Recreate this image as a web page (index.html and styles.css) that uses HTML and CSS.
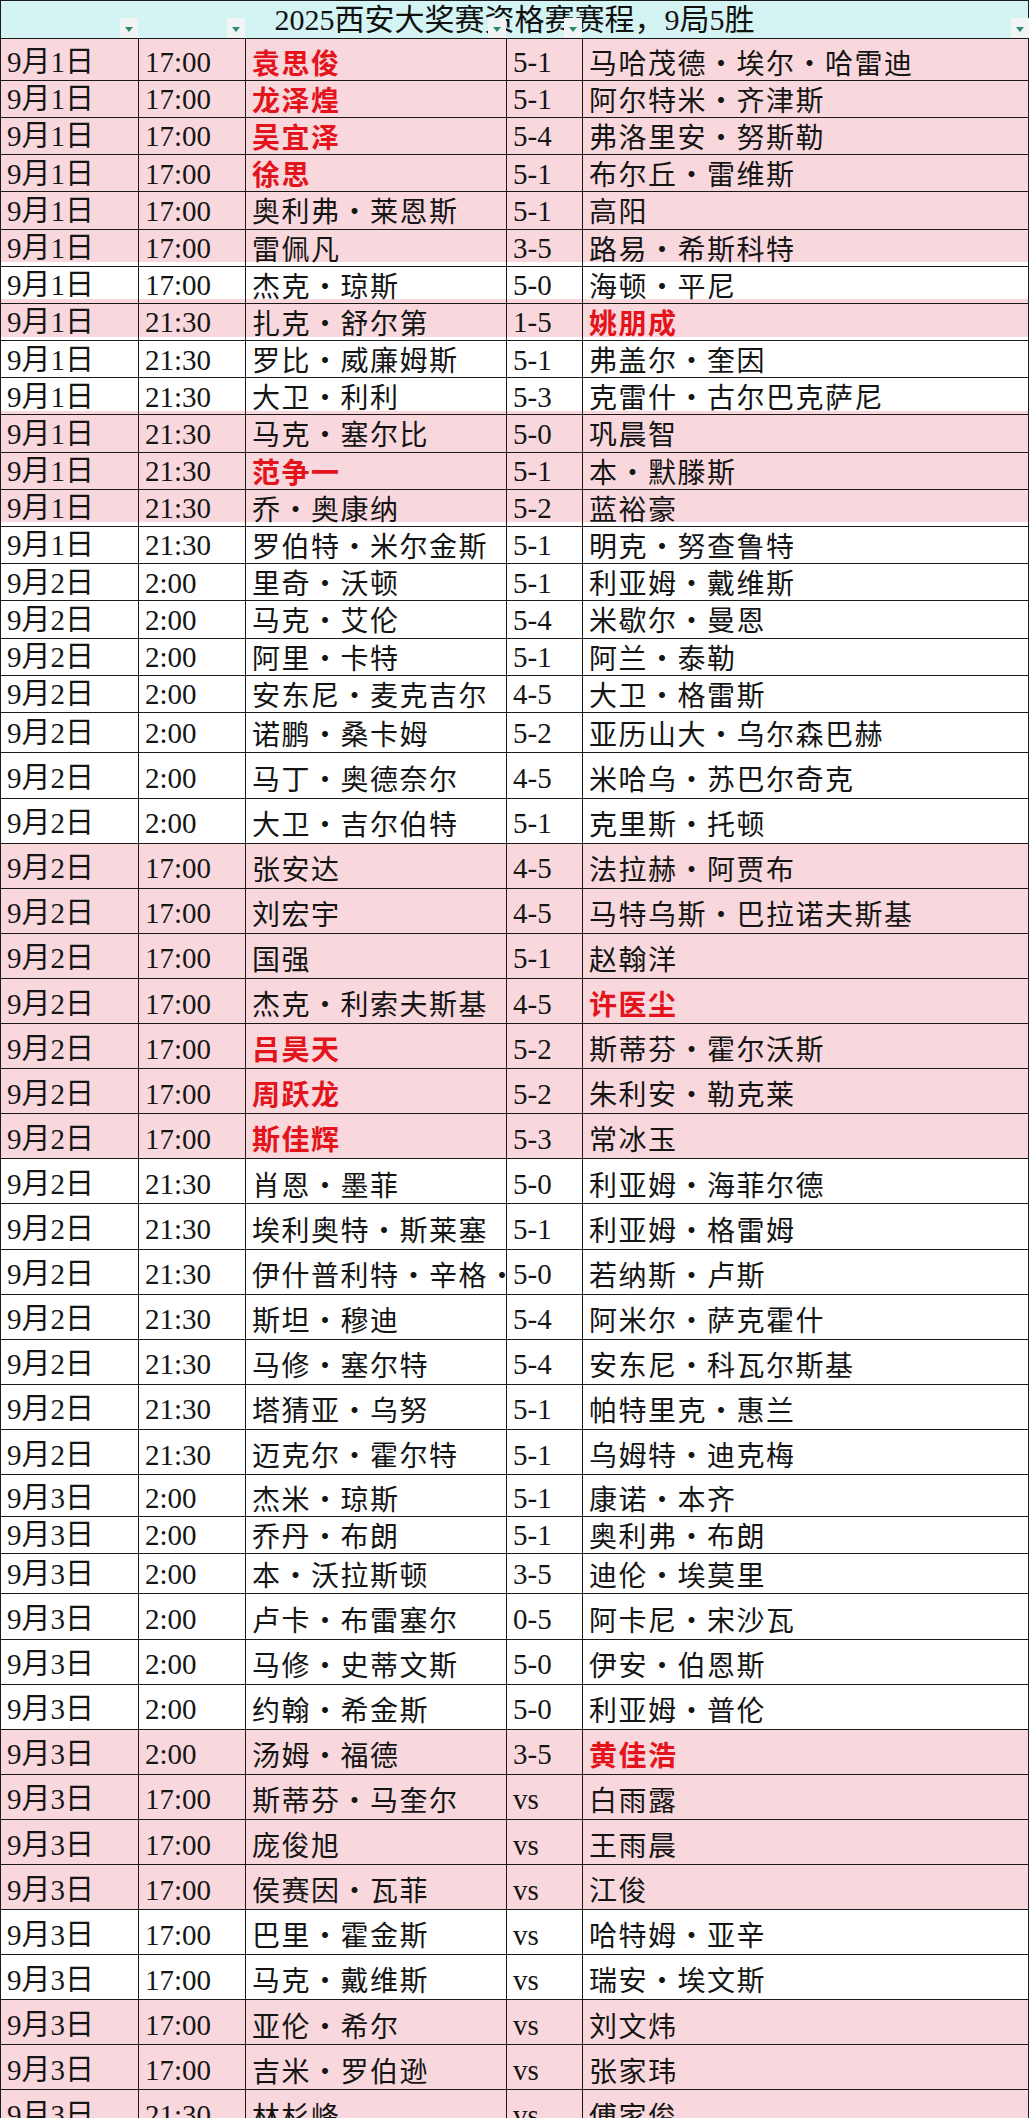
FILE: index.html
```html
<!DOCTYPE html>
<html lang="zh-CN">
<head>
<meta charset="utf-8">
<title>2025西安大奖赛资格赛赛程</title>
<link rel="stylesheet" href="styles.css">
</head>
<body>
<div class="sheet">
  <div class="head">
    <div class="title">2025西安大奖赛资格赛赛程，9局5胜</div>
    <div class="hc h1"><span class="dd"></span></div>
    <div class="hc h2"><span class="dd"></span></div>
    <div class="hc h3"><span class="dd"></span></div>
    <div class="hc h4"><span class="dd"></span></div>
    <div class="hc h5"><span class="dd"></span></div>
  </div>

  <div class="row s pink"><div class="c">9月1日</div><div class="c">17:00</div><div class="c n red">袁思俊</div><div class="c">5-1</div><div class="c n">马哈茂德•埃尔•哈雷迪</div></div>
  <div class="row s pink"><div class="c">9月1日</div><div class="c">17:00</div><div class="c n red">龙泽煌</div><div class="c">5-1</div><div class="c n">阿尔特米•齐津斯</div></div>
  <div class="row s pink"><div class="c">9月1日</div><div class="c">17:00</div><div class="c n red">吴宜泽</div><div class="c">5-4</div><div class="c n">弗洛里安•努斯勒</div></div>
  <div class="row s pink"><div class="c">9月1日</div><div class="c">17:00</div><div class="c n red">徐思</div><div class="c">5-1</div><div class="c n">布尔丘•雷维斯</div></div>
  <div class="row s pink"><div class="c">9月1日</div><div class="c">17:00</div><div class="c n">奥利弗•莱恩斯</div><div class="c">5-1</div><div class="c n">高阳</div></div>
  <div class="row s pink"><div class="c">9月1日</div><div class="c">17:00</div><div class="c n">雷佩凡</div><div class="c">3-5</div><div class="c n">路易•希斯科特</div></div>
  <div class="row s"><div class="c">9月1日</div><div class="c">17:00</div><div class="c n">杰克•琼斯</div><div class="c">5-0</div><div class="c n">海顿•平尼</div></div>
  <div class="row s pink"><div class="c">9月1日</div><div class="c">21:30</div><div class="c n">扎克•舒尔第</div><div class="c">1-5</div><div class="c n red">姚朋成</div></div>
  <div class="row s"><div class="c">9月1日</div><div class="c">21:30</div><div class="c n">罗比•威廉姆斯</div><div class="c">5-1</div><div class="c n">弗盖尔•奎因</div></div>
  <div class="row s"><div class="c">9月1日</div><div class="c">21:30</div><div class="c n">大卫•利利</div><div class="c">5-3</div><div class="c n">克雷什•古尔巴克萨尼</div></div>
  <div class="row s pink"><div class="c">9月1日</div><div class="c">21:30</div><div class="c n">马克•塞尔比</div><div class="c">5-0</div><div class="c n">巩晨智</div></div>
  <div class="row s pink"><div class="c">9月1日</div><div class="c">21:30</div><div class="c n red">范争一</div><div class="c">5-1</div><div class="c n">本•默滕斯</div></div>
  <div class="row s pink"><div class="c">9月1日</div><div class="c">21:30</div><div class="c n">乔•奥康纳</div><div class="c">5-2</div><div class="c n">蓝裕豪</div></div>
  <div class="row s"><div class="c">9月1日</div><div class="c">21:30</div><div class="c n">罗伯特•米尔金斯</div><div class="c">5-1</div><div class="c n">明克•努查鲁特</div></div>
  <div class="row s"><div class="c">9月2日</div><div class="c">2:00</div><div class="c n">里奇•沃顿</div><div class="c">5-1</div><div class="c n">利亚姆•戴维斯</div></div>
  <div class="row s"><div class="c">9月2日</div><div class="c">2:00</div><div class="c n">马克•艾伦</div><div class="c">5-4</div><div class="c n">米歇尔•曼恩</div></div>
  <div class="row s"><div class="c">9月2日</div><div class="c">2:00</div><div class="c n">阿里•卡特</div><div class="c">5-1</div><div class="c n">阿兰•泰勒</div></div>
  <div class="row s"><div class="c">9月2日</div><div class="c">2:00</div><div class="c n">安东尼•麦克吉尔</div><div class="c">4-5</div><div class="c n">大卫•格雷斯</div></div>
  <div class="row t"><div class="c">9月2日</div><div class="c">2:00</div><div class="c n">诺鹏•桑卡姆</div><div class="c">5-2</div><div class="c n">亚历山大•乌尔森巴赫</div></div>
  <div class="row t"><div class="c">9月2日</div><div class="c">2:00</div><div class="c n">马丁•奥德奈尔</div><div class="c">4-5</div><div class="c n">米哈乌•苏巴尔奇克</div></div>
  <div class="row t"><div class="c">9月2日</div><div class="c">2:00</div><div class="c n">大卫•吉尔伯特</div><div class="c">5-1</div><div class="c n">克里斯•托顿</div></div>
  <div class="row t pink"><div class="c">9月2日</div><div class="c">17:00</div><div class="c n">张安达</div><div class="c">4-5</div><div class="c n">法拉赫•阿贾布</div></div>
  <div class="row t pink"><div class="c">9月2日</div><div class="c">17:00</div><div class="c n">刘宏宇</div><div class="c">4-5</div><div class="c n">马特乌斯•巴拉诺夫斯基</div></div>
  <div class="row t pink"><div class="c">9月2日</div><div class="c">17:00</div><div class="c n">国强</div><div class="c">5-1</div><div class="c n">赵翰洋</div></div>
  <div class="row t pink"><div class="c">9月2日</div><div class="c">17:00</div><div class="c n">杰克•利索夫斯基</div><div class="c">4-5</div><div class="c n red">许医尘</div></div>
  <div class="row t pink"><div class="c">9月2日</div><div class="c">17:00</div><div class="c n red">吕昊天</div><div class="c">5-2</div><div class="c n">斯蒂芬•霍尔沃斯</div></div>
  <div class="row t pink"><div class="c">9月2日</div><div class="c">17:00</div><div class="c n red">周跃龙</div><div class="c">5-2</div><div class="c n">朱利安•勒克莱</div></div>
  <div class="row t pink"><div class="c">9月2日</div><div class="c">17:00</div><div class="c n red">斯佳辉</div><div class="c">5-3</div><div class="c n">常冰玉</div></div>
  <div class="row t"><div class="c">9月2日</div><div class="c">21:30</div><div class="c n">肖恩•墨菲</div><div class="c">5-0</div><div class="c n">利亚姆•海菲尔德</div></div>
  <div class="row t"><div class="c">9月2日</div><div class="c">21:30</div><div class="c n">埃利奥特•斯莱塞</div><div class="c">5-1</div><div class="c n">利亚姆•格雷姆</div></div>
  <div class="row t"><div class="c">9月2日</div><div class="c">21:30</div><div class="c n">伊什普利特•辛格•坎达</div><div class="c">5-0</div><div class="c n">若纳斯•卢斯</div></div>
  <div class="row t"><div class="c">9月2日</div><div class="c">21:30</div><div class="c n">斯坦•穆迪</div><div class="c">5-4</div><div class="c n">阿米尔•萨克霍什</div></div>
  <div class="row t"><div class="c">9月2日</div><div class="c">21:30</div><div class="c n">马修•塞尔特</div><div class="c">5-4</div><div class="c n">安东尼•科瓦尔斯基</div></div>
  <div class="row t"><div class="c">9月2日</div><div class="c">21:30</div><div class="c n">塔猜亚•乌努</div><div class="c">5-1</div><div class="c n">帕特里克•惠兰</div></div>
  <div class="row t"><div class="c">9月2日</div><div class="c">21:30</div><div class="c n">迈克尔•霍尔特</div><div class="c">5-1</div><div class="c n">乌姆特•迪克梅</div></div>
  <div class="row s"><div class="c">9月3日</div><div class="c">2:00</div><div class="c n">杰米•琼斯</div><div class="c">5-1</div><div class="c n">康诺•本齐</div></div>
  <div class="row s"><div class="c">9月3日</div><div class="c">2:00</div><div class="c n">乔丹•布朗</div><div class="c">5-1</div><div class="c n">奥利弗•布朗</div></div>
  <div class="row t"><div class="c">9月3日</div><div class="c">2:00</div><div class="c n">本•沃拉斯顿</div><div class="c">3-5</div><div class="c n">迪伦•埃莫里</div></div>
  <div class="row t"><div class="c">9月3日</div><div class="c">2:00</div><div class="c n">卢卡•布雷塞尔</div><div class="c">0-5</div><div class="c n">阿卡尼•宋沙瓦</div></div>
  <div class="row t"><div class="c">9月3日</div><div class="c">2:00</div><div class="c n">马修•史蒂文斯</div><div class="c">5-0</div><div class="c n">伊安•伯恩斯</div></div>
  <div class="row t"><div class="c">9月3日</div><div class="c">2:00</div><div class="c n">约翰•希金斯</div><div class="c">5-0</div><div class="c n">利亚姆•普伦</div></div>
  <div class="row t pink"><div class="c">9月3日</div><div class="c">2:00</div><div class="c n">汤姆•福德</div><div class="c">3-5</div><div class="c n red">黄佳浩</div></div>
  <div class="row t pink"><div class="c">9月3日</div><div class="c">17:00</div><div class="c n">斯蒂芬•马奎尔</div><div class="c">vs</div><div class="c n">白雨露</div></div>
  <div class="row t pink"><div class="c">9月3日</div><div class="c">17:00</div><div class="c n">庞俊旭</div><div class="c">vs</div><div class="c n">王雨晨</div></div>
  <div class="row t pink"><div class="c">9月3日</div><div class="c">17:00</div><div class="c n">侯赛因•瓦菲</div><div class="c">vs</div><div class="c n">江俊</div></div>
  <div class="row t"><div class="c">9月3日</div><div class="c">17:00</div><div class="c n">巴里•霍金斯</div><div class="c">vs</div><div class="c n">哈特姆•亚辛</div></div>
  <div class="row t"><div class="c">9月3日</div><div class="c">17:00</div><div class="c n">马克•戴维斯</div><div class="c">vs</div><div class="c n">瑞安•埃文斯</div></div>
  <div class="row t pink"><div class="c">9月3日</div><div class="c">17:00</div><div class="c n">亚伦•希尔</div><div class="c">vs</div><div class="c n">刘文炜</div></div>
  <div class="row t pink"><div class="c">9月3日</div><div class="c">17:00</div><div class="c n">吉米•罗伯逊</div><div class="c">vs</div><div class="c n">张家玮</div></div>
  <div class="row t pink"><div class="c">9月3日</div><div class="c">21:30</div><div class="c n">林杉峰</div><div class="c">vs</div><div class="c n">傅家俊</div></div>
</div>
</body>
</html>
```

FILE: styles.css
```css
html, body {
  margin: 0;
  padding: 0;
  background: #ffffff;
}

body {
  width: 1030px;
  height: 2118px;
  overflow: hidden;
  font-family: "Liberation Serif", "Noto Sans CJK SC", serif;
  color: #151515;
}

.sheet {
  width: 1029px;
  border-left: 1px solid #1a1a1a;
  border-top: 1px solid #1a1a1a;
  box-sizing: border-box;
}

.head {
  display: grid;
  grid-template-columns: 137px 107px 261px 76px 446px;
  grid-template-rows: 37px;
  background: #d4f4f3;
  border-bottom: 1px solid #1a1a1a;
  border-right: 1px solid #1a1a1a;
  box-sizing: border-box;
  height: 38px;
}

.title {
  grid-row: 1;
  grid-column: 1 / -1;
  text-align: center;
  font-size: 30px;
  line-height: 36px;
  padding-top: 1px;
  color: #111;
  white-space: nowrap;
}

.hc {
  grid-row: 1;
  display: flex;
  justify-content: flex-end;
  align-items: flex-end;
}

.h1 { grid-column: 1; }
.h2 { grid-column: 2; }
.h3 { grid-column: 3; }
.h4 { grid-column: 4; }
.h5 { grid-column: 5; margin-right: -1px; }

.dd {
  width: 18px;
  height: 20px;
  background: #f1f4f4;
  display: flex;
  align-items: center;
  justify-content: center;
}

.dd::after {
  content: "";
  width: 0;
  height: 0;
  border-left: 4px solid transparent;
  border-right: 4px solid transparent;
  border-top: 5px solid #2b8c6e;
  margin-top: 2px;
}

.row {
  display: grid;
  grid-template-columns: 138px 107px 261px 76px 446px;
  background: #ffffff;
}

.row.pink {
  background: #f9d8dd;
}

.row.s { height: 37.2px; }
.row.t { height: 45.1px; }

.c {
  box-sizing: border-box;
  border-right: 1px solid #1a1a1a;
  border-bottom: 1px solid #1a1a1a;
  display: flex;
  align-items: center;
  padding-left: 6px;
  padding-top: 6px;
  font-size: 29px;
  line-height: 1.2;
  white-space: nowrap;
  overflow-x: clip;
  overflow-y: visible;
}

.c.n {
  font-family: "Noto Sans CJK SC", "Liberation Serif", sans-serif;
  font-size: 28px;
  letter-spacing: 1.5px;
}

.c.red {
  color: #e3141c;
  font-weight: 700;
}
```
